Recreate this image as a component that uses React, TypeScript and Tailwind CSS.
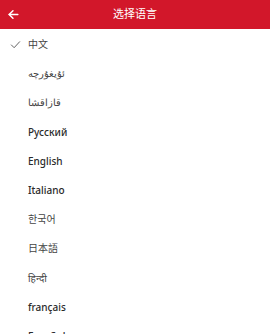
import React from "react";

const languages = [
  { name: "中文", latin: false },
  { name: "ئۇيغۇرچە", latin: false },
  { name: "قازاقشا", latin: false },
  { name: "Русский", latin: true },
  { name: "English", latin: true },
  { name: "Italiano", latin: true },
  { name: "한국어", latin: false },
  { name: "日本語", latin: false },
  { name: "हिन्दी", latin: false },
  { name: "français", latin: true },
  { name: "Español", latin: true },
];

const App = () => {
  return (
    <div
      className="w-[270px] h-[334px] overflow-hidden bg-white"
      style={{ fontFamily: '"Noto Sans", "Noto Sans CJK SC", sans-serif' }}
    >
      <div className="h-[29px] bg-[#d2172a] flex items-center relative">
        <svg
          className="absolute left-[7px] top-[8px]"
          width="13"
          height="13"
          viewBox="0 0 24 24"
          fill="none"
          stroke="white"
          strokeWidth="2.8"
          strokeLinecap="round"
          strokeLinejoin="round"
        >
          <path d="M20 12H4" />
          <path d="M11 5l-7 7 7 7" />
        </svg>
        <div className="w-full text-center text-white text-[11px]">选择语言</div>
      </div>
      <div className="pt-[1px]">
        {languages.map((lang, i) => (
          <div key={lang.name} className="h-[29.2px] flex items-center">
            <div className="w-[28px] flex justify-center pl-[2px]">
              {i === 0 && (
                <svg width="11" height="11" viewBox="0 0 24 24" fill="none" stroke="#555" strokeWidth="2" strokeLinecap="round" strokeLinejoin="round">
                  <path d="M3 13l6 6L21 6" />
                </svg>
              )}
            </div>
            <span
              className={
                lang.latin
                  ? "text-[10px] font-medium text-[#2a2a2a]"
                  : "text-[10px] font-normal text-[#444]"
              }
            >
              {lang.name}
            </span>
          </div>
        ))}
      </div>
    </div>
  );
};

export default App;
